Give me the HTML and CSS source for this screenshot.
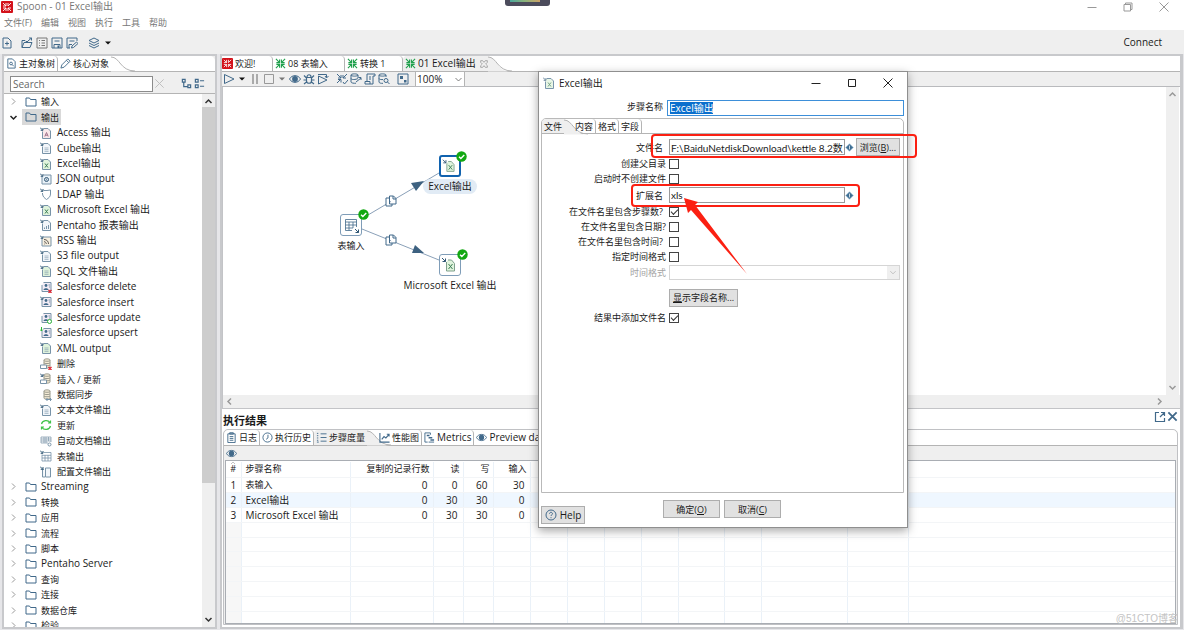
FILE: index.html
```html
<!DOCTYPE html>
<html lang="zh-CN">
<head>
<meta charset="utf-8">
<title>Spoon - 01 Excel输出</title>
<link rel="stylesheet" href="styles.css">
</head>
<body>
<svg class="sprite" aria-hidden="true">
  <symbol id="tab-curve" viewBox="0 0 24 15"><path class="curve-fill" d="M0 0C9 0 9 15 22 15H0z"/><path class="curve-line" d="M0 .5C9 .5 9 14.500 24 14.500"/></symbol>
  <symbol id="logo" viewBox="0 0 12 12"><rect width="12" height="12" rx="1" fill="#d3121a" stroke="none"/><path d="M2 2l3 3M10 2L7 5M2 10l3-3M10 10L7 7M5 2v3H2M7 10V7h3M7 2v3M2 7h3v3" stroke="#fff" stroke-width=".9" fill="none"/></symbol>
  <symbol id="trans" viewBox="0 0 12 12"><path d="M1 1l4 4M11 1L7 5M1 11l4-4M11 11L7 7M5 1.500V5H1.500M7 1.500V5h3.500M1.500 7H5v3.500M10.500 7H7v3.500" stroke="#1fa04c" stroke-width="1.200" fill="none"/></symbol>
  <symbol id="new" viewBox="0 0 12 12"><path d="M2 1h5l3 3v7H2zM6 4.500v4M4 6.500h4"/></symbol>
  <symbol id="open" viewBox="0 0 12 12"><path d="M1 10.500v-7h3l1 1h2M1 10.500l2-5h8l-2 5zM7 4l3.500-3M8 1h2.500v2.500"/></symbol>
  <symbol id="listbox" viewBox="0 0 12 12"><path d="M1 1h10v10H1zM3 3.500h1M3 6h1M3 8.500h1M5.500 3.500H9M5.500 6H9M5.500 8.500H9" stroke="#777"/></symbol>
  <symbol id="save" viewBox="0 0 12 12"><path d="M1 1h10v10H1zM3 11V7.500h6V11M3.500 4h5"/><path d="M6.500 8.500H8V11H6.500z" class="solid"/></symbol>
  <symbol id="saveas" viewBox="0 0 12 12"><path d="M4 11H1V1h10v3M3.500 4h5M3 11V7.500h3M5.500 11l.5-2 4.500-4L12 6.500 7.500 10.500z"/></symbol>
  <symbol id="layers" viewBox="0 0 12 12"><path d="M6 1l5 2.500L6 6 1 3.500zM1 6l5 2.500L11 6M1 8.500L6 11l5-2.500"/></symbol>
  <symbol id="docsearch" viewBox="0 0 12 12"><path d="M2 1h5l3 3v7H2z"/><circle cx="5.500" cy="6" r="1.500"/><path d="M6.500 7l2 2"/></symbol>
  <symbol id="pencil" viewBox="0 0 12 12"><path d="M1 11l1-3.500L8.500 1 11 3.500 4.500 10zM7 2.500L9.500 5"/></symbol>
  <symbol id="x" viewBox="0 0 12 12"><path d="M1.500 1.500l9 9M10.500 1.500l-9 9"/></symbol>
  <symbol id="closetab" viewBox="0 0 12 12"><path d="M1 1h3l2 2.500L8 1h3v2.500L8.500 6 11 8.500V11H8L6 8.500 4 11H1V8.500L3.500 6 1 3.500z"/></symbol>
  <symbol id="min" viewBox="0 0 12 12"><path d="M1.500 6.500h9"/></symbol>
  <symbol id="max" viewBox="0 0 12 12"><path d="M2.500 2.500h7v7h-7z"/></symbol>
  <symbol id="restore" viewBox="0 0 12 12"><path d="M2 3.500h6.500V10H2zM3.500 3.500V2H10v6.500H8.500"/></symbol>
  <symbol id="expand" viewBox="0 0 12 12"><path d="M1.500 1.500h3v3h-3zM7.500 7.500h3v3h-3zM3 4.500V9.500h4.500" stroke-width="1.300"/></symbol>
  <symbol id="collapse" viewBox="0 0 12 12"><path d="M1.500 1.500h3v3h-3zM1.500 7.500h3v3h-3zM6.500 3H11M6.500 9H11" stroke-width="1.300"/></symbol>
  <symbol id="right" viewBox="0 0 12 12"><path d="M4 2l4 4-4 4"/></symbol>
  <symbol id="left" viewBox="0 0 12 12"><path d="M8 2L4 6l4 4"/></symbol>
  <symbol id="down" viewBox="0 0 12 12"><path d="M2 4l4 4 4-4"/></symbol>
  <symbol id="up" viewBox="0 0 12 12"><path d="M2 8l4-4 4 4"/></symbol>
  <symbol id="caret" viewBox="0 0 12 12"><path d="M0 3h12L6 9z" stroke="none" fill="currentColor"/></symbol>
  <symbol id="folder" viewBox="0 0 12 12"><path d="M1 10V2h3.500l1 1.500H11V10z"/></symbol>
  <symbol id="arr" viewBox="0 0 12 12"><path d="M0 .5l2.500 2.500M3 1v2.300H.7" stroke="#2f5674"/></symbol>
  <symbol id="doc" viewBox="0 0 12 12"><path d="M4 1.500h4l2.500 2.500v7.500H2.500V4.500" fill="var(--tint,#fff)"/><use href="#arr"/></symbol>
  <symbol id="access" viewBox="0 0 12 12"><use href="#doc"/><path d="M4.800 9.500l1.700-4 1.700 4M5.300 8.200h2.400" stroke="#a0708a"/></symbol>
  <symbol id="lines" viewBox="0 0 12 12"><use href="#doc"/><path d="M4.500 6h4M4.500 7.700h4M4.500 9.400h4" stroke-width=".6"/></symbol>
  <symbol id="excel" viewBox="0 0 12 12"><use href="#doc"/><path d="M5 5.500l3 4M8 5.500l-3 4" stroke="#3c7d55"/></symbol>
  <symbol id="json" viewBox="0 0 12 12"><path d="M4 2h7v9H2V4" fill="#eaf2f8"/><circle cx="6.500" cy="6.500" r="2" stroke="#2f5674"/><path d="M6.500 5.500v2" stroke-width="1.300"/><use href="#arr"/></symbol>
  <symbol id="ldap" viewBox="0 0 12 12"><path d="M4 2.500h3L10.500 2v4c0 3-2 4-4 5.500C4.500 10 3 9 2.500 6V5"/><use href="#arr"/></symbol>
  <symbol id="chart" viewBox="0 0 12 12"><use href="#doc"/><path d="M4.500 10V8.500M6.500 10V7M8.500 10V6"/></symbol>
  <symbol id="rss" viewBox="0 0 12 12"><path d="M4 2h7v9H2V4" fill="#f7efdf"/><path d="M4 4.500c3 0 4.500 2 4.500 4.500M4 6.700c1.500 0 2.300 1 2.300 2.300M4 9h.6" stroke="#5f5a55"/><use href="#arr"/></symbol>
  <symbol id="person" viewBox="0 0 12 12"><path d="M3.500 1.500H11v9H2V4" fill="#f3ecf5"/><circle cx="6" cy="4.500" r="1.400" class="solid"/><path d="M3.500 9c0-2.500 5-2.500 5 0z" class="solid"/><path d="M8.500 4H10M9 6h1"/></symbol>
  <symbol id="del" viewBox="0 0 12 12"><use href="#person"/><path d="M8.500 9l3 3M11.500 9l-3 3" stroke="#e0202c" stroke-width="1.300"/></symbol>
  <symbol id="ins" viewBox="0 0 12 12"><use href="#person"/><use href="#arr"/></symbol>
  <symbol id="upd" viewBox="0 0 12 12"><use href="#person"/><circle cx="9.500" cy="9.500" r="2" fill="#fff" stroke="#2eb53a"/></symbol>
  <symbol id="ups" viewBox="0 0 12 12"><use href="#person"/><path d="M1.500 0v4M0 2.500L1.500 4 3 2.500" stroke="#2eb53a"/></symbol>
  <symbol id="db" viewBox="0 0 12 12"><path d="M4 2v7c0 1.500 6 1.500 6 0V2c0-1.500-6-1.500-6 0zM4 2.500c0 1 6 1 6 0M4 4.800c0 1 6 1 6 0M4 7c0 1 6 1 6 0" fill="#f5ecd7" stroke="#9a9a8c"/></symbol>
  <symbol id="dbdel" viewBox="0 0 12 12"><use href="#db"/><path d="M.5 7h6v3.500h-6z" fill="#fff"/><path d="M8.500 9l3 3M11.500 9l-3 3" stroke="#e0202c" stroke-width="1.300"/></symbol>
  <symbol id="dbins" viewBox="0 0 12 12"><use href="#db"/><path d="M.5 7h6v3.500h-6z" fill="#fff"/><use href="#arr"/></symbol>
  <symbol id="dbsync" viewBox="0 0 12 12"><use href="#db"/><path d="M6 10.500h5M7.500 9L6 10.500 7.500 12M10 9l1.500 1.500L10 12"/></symbol>
  <symbol id="refresh" viewBox="0 0 12 12"><path d="M1.500 5C2.500 1 8 .5 10 3.500M10.500 7C9.500 11 4 11.500 2 8.500M10.500 1.500V4H8M1.500 10.500V8H4" stroke="#3fc247" stroke-width="1.200"/></symbol>
  <symbol id="autodoc" viewBox="0 0 12 12"><path d="M1 2h10v5M1 2v6h7M1 4h10M1 6h10M4 2v6M6 2v6M8.500 2v4" stroke-width=".7"/><circle cx="9.500" cy="9.500" r="1.500"/></symbol>
  <symbol id="table" viewBox="0 0 12 12"><path d="M4 2.500h7v8.500H2V4.500M2 5.300h9M2 8h9M5 5v6M8 5v6" stroke-width=".8"/><use href="#arr"/></symbol>
  <symbol id="conf" viewBox="0 0 12 12"><path d="M5.500 2h5v9h-5zM4 3.500H2.500V11H5" fill="#f2f6fa"/><use href="#arr"/></symbol>
  <symbol id="play" viewBox="0 0 12 12"><path d="M1.500 1.500L11 6l-9.500 4.500z"/></symbol>
  <symbol id="pause" viewBox="0 0 12 12"><path d="M3 1h2v10H3zM7 1h2v10H7z" stroke="none" fill="#aaa"/></symbol>
  <symbol id="stop" viewBox="0 0 12 12"><path d="M1.500 1.500h9v9h-9z" stroke="#999"/></symbol>
  <symbol id="eye" viewBox="0 0 12 12"><path d="M.5 6C3 1.500 9 1.500 11.500 6 9 10.500 3 10.500.5 6z"/><circle cx="6" cy="6" r="2.900" class="solid"/></symbol>
  <symbol id="bug" viewBox="0 0 12 12"><path d="M3.500 4.500h5V8c0 3-5 3-5 0zM4 4c0-3 4-3 4 0M1 2.500L3.500 5M11 2.500L8.500 5M.5 7h3M8.500 7h3M1 11l2.500-2M11 11L8.500 9" stroke-width="1.200"/></symbol>
  <symbol id="replay" viewBox="0 0 12 12"><path d="M1.500 3L10 7l-8.500 4zM1 1.500h8.500V4.500M8 3l1.500 2L11.500 3"/></symbol>
  <symbol id="verify" viewBox="0 0 12 12"><path d="M1 1l4 4M11 1L7 5M1 10l4-4M5 2v3H2M7 2v3h3M2 6.500h3v3M7 9l1.500 2L12 7"/></symbol>
  <symbol id="impact" viewBox="0 0 12 12"><path d="M1 2v7c0 1 3 1.500 5 1.200M1 2c0-1.500 7-1.500 7 0s-7 1.500-7 0M1 5.500c0 1.500 5 1.200 7 0M8 2v3M6 9l5-4M8.500 4.500H11V7"/></symbol>
  <symbol id="sql" viewBox="0 0 12 12"><path d="M3 8V1h8v2H9v8H1V8.500h5V11M5 4h2M5 6h2"/></symbol>
  <symbol id="dbfind" viewBox="0 0 12 12"><path d="M1 2v7c0 1 2 1.500 4 1.300M1 2c0-1.500 7-1.500 7 0s-7 1.500-7 0M1 5.500c0 1 3 1.300 4 1M8 2v2"/><circle cx="8" cy="7.500" r="2"/><path d="M9.500 9l2 2"/></symbol>
  <symbol id="showres" viewBox="0 0 12 12"><path d="M1 1h10v10H1z"/><path d="M3 3h3v3H3zM7 7h2.500v2.500H7z" class="solid"/></symbol>
  <symbol id="log" viewBox="0 0 12 12"><path d="M2 2h8v9.500H2zM4 .8h4v1.500H4zM4 5h4M4 7h4M4 9h4"/></symbol>
  <symbol id="clock" viewBox="0 0 12 12"><circle cx="6" cy="6" r="5"/><path d="M6.500 3v3.500L4.500 8"/></symbol>
  <symbol id="steps" viewBox="0 0 12 12"><path d="M1 1.500h1.500M1 4h1.500M1 6.500h1.500M1 9h1.500M5 2h6.500M5 6h6.500M5 10h6.500M1 11h2"/></symbol>
  <symbol id="perf" viewBox="0 0 12 12"><path d="M1 1v10h10.500M3 8l2.500-3 2 1.500L11 2.500M8.500 2.500H11V5" stroke-width="1.200"/></symbol>
  <symbol id="metrics" viewBox="0 0 12 12"><path d="M4 11H1V1h6v2M5 11h6"/><path d="M3 3h3v1.500H3zM5 5.500h4V7H5zM7 8h4v1.500H7z" class="solid"/></symbol>
  <symbol id="popout" viewBox="0 0 12 12"><path d="M5 1.500H1.500v9h9V7M7 1.500h3.500V5M10.500 1.500L6 6" stroke-width="1.200"/></symbol>
  <symbol id="diamond" viewBox="0 0 12 12"><path d="M6 1l5 5-5 5-5-5z" fill="#3d6d92" stroke="#9ebdd3"/><path d="M6 3.500v5" stroke="#fff"/></symbol>
  <symbol id="help" viewBox="0 0 12 12"><circle cx="6" cy="6" r="5"/><path d="M4.500 4.800c0-2 3-2 3 0 0 1-1.500 1-1.500 2.200M6 8.200v1"/></symbol>
  <symbol id="copy" viewBox="0 0 12 12"><path d="M4.500 1h4L11 3.500V9H4.500zM8 1v3h3M4.500 3H1v8h6V9" fill="#fff"/></symbol>
  <symbol id="ok" viewBox="0 0 12 12"><circle cx="6" cy="6" r="5.700" fill="#12a812" stroke="none"/><path d="M3.300 6.200l2 1.900L9 4.300" stroke="#fff" stroke-width="1.500"/></symbol>
  <symbol id="n-excel" viewBox="0 0 20 20"><path d="M6.500 7v9h8V8.500l-3-3.500H8" fill="#dff3dc" stroke="#7ea08c"/><path d="M8.500 9l4 5M12.500 9l-4 5" stroke="#3c7d55"/><path d="M2 3l3.500 3.500M5.500 3.500v3h-3" stroke="#2f5674"/></symbol>
  <symbol id="n-table" viewBox="0 0 20 20"><path d="M11 15.500H4.500v-11h11V12M4.500 7h11M4.500 10h11M4.500 13H12M8 7v8.500M12 7v6" stroke-width=".8"/><path d="M14 14l3.500 3.500M17.500 14.500v3h-3" stroke="#2f5674"/></symbol>
</svg>

<div class="notch" aria-hidden="true"><span></span></div>
<header class="titlebar">
  <svg class="icon logo"><use href="#logo"/></svg>
  <h1>Spoon - 01 Excel输出</h1>
  <div class="winbtns">
    <button aria-label="最小化"><svg class="icon"><use href="#min"/></svg></button>
    <button aria-label="还原"><svg class="icon"><use href="#restore"/></svg></button>
    <button aria-label="关闭"><svg class="icon"><use href="#x"/></svg></button>
  </div>
</header>
<nav class="menu"><a href="#">文件(F)</a><a href="#">编辑</a><a href="#">视图</a><a href="#">执行</a><a href="#">工具</a><a href="#">帮助</a></nav>
<div class="maintools">
  <button class="first" aria-label="新建"><svg class="icon"><use href="#new"/></svg></button>
  <button aria-label="打开"><svg class="icon"><use href="#open"/></svg></button>
  <button aria-label="浏览"><svg class="icon"><use href="#listbox"/></svg></button>
  <button aria-label="保存"><svg class="icon"><use href="#save"/></svg></button>
  <button aria-label="另存为"><svg class="icon"><use href="#saveas"/></svg></button>
  <button class="persp" aria-label="视图"><svg class="icon"><use href="#layers"/></svg><svg class="icon tiny"><use href="#caret"/></svg></button>
  <button class="connect">Connect</button>
</div>

<main>
  <aside class="side">
    <div class="tabs">
      <button class="tab"><svg class="icon"><use href="#docsearch"/></svg>主对象树</button>
      <button class="tab active"><svg class="icon"><use href="#pencil"/></svg>核心对象<svg class="curve"><use href="#tab-curve"/></svg></button>
    </div>
    <div class="searchbar">
      <input type="text" placeholder="Search" aria-label="Search">
      <button class="clear" aria-label="清除"><svg class="icon"><use href="#x"/></svg></button>
      <button aria-label="展开"><svg class="icon"><use href="#expand"/></svg></button>
      <button aria-label="折叠"><svg class="icon"><use href="#collapse"/></svg></button>
    </div>
    <div class="treebox">
      <ul class="tree">
        <li class="group"><svg class="chev"><use href="#right"/></svg><span><svg class="icon"><use href="#folder"/></svg>输入</span></li>
        <li class="group open"><svg class="chev"><use href="#down"/></svg><span><svg class="icon"><use href="#folder"/></svg>输出</span></li>
        <li class="lat"><svg class="icon pink"><use href="#access"/></svg>Access 输出</li>
        <li class="lat"><svg class="icon"><use href="#lines"/></svg>Cube输出</li>
        <li class="lat"><svg class="icon green"><use href="#excel"/></svg>Excel输出</li>
        <li class="lat"><svg class="icon"><use href="#json"/></svg>JSON output</li>
        <li class="lat"><svg class="icon"><use href="#ldap"/></svg>LDAP 输出</li>
        <li class="lat"><svg class="icon green"><use href="#excel"/></svg>Microsoft Excel 输出</li>
        <li class="lat"><svg class="icon"><use href="#chart"/></svg>Pentaho 报表输出</li>
        <li class="lat"><svg class="icon"><use href="#rss"/></svg>RSS 输出</li>
        <li class="lat"><svg class="icon"><use href="#lines"/></svg>S3 file output</li>
        <li class="lat"><svg class="icon green"><use href="#lines"/></svg>SQL 文件输出</li>
        <li class="lat"><svg class="icon"><use href="#del"/></svg>Salesforce delete</li>
        <li class="lat"><svg class="icon"><use href="#ins"/></svg>Salesforce insert</li>
        <li class="lat"><svg class="icon"><use href="#upd"/></svg>Salesforce update</li>
        <li class="lat"><svg class="icon"><use href="#ups"/></svg>Salesforce upsert</li>
        <li class="lat"><svg class="icon green"><use href="#lines"/></svg>XML output</li>
        <li><svg class="icon"><use href="#dbdel"/></svg>删除</li>
        <li><svg class="icon"><use href="#dbins"/></svg>插入 / 更新</li>
        <li><svg class="icon"><use href="#dbsync"/></svg>数据同步</li>
        <li><svg class="icon"><use href="#lines"/></svg>文本文件输出</li>
        <li><svg class="icon"><use href="#refresh"/></svg>更新</li>
        <li><svg class="icon"><use href="#autodoc"/></svg>自动文档输出</li>
        <li><svg class="icon"><use href="#table"/></svg>表输出</li>
        <li><svg class="icon"><use href="#conf"/></svg>配置文件输出</li>
        <li class="group lat"><svg class="chev"><use href="#right"/></svg><span><svg class="icon"><use href="#folder"/></svg>Streaming</span></li>
        <li class="group"><svg class="chev"><use href="#right"/></svg><span><svg class="icon"><use href="#folder"/></svg>转换</span></li>
        <li class="group"><svg class="chev"><use href="#right"/></svg><span><svg class="icon"><use href="#folder"/></svg>应用</span></li>
        <li class="group"><svg class="chev"><use href="#right"/></svg><span><svg class="icon"><use href="#folder"/></svg>流程</span></li>
        <li class="group"><svg class="chev"><use href="#right"/></svg><span><svg class="icon"><use href="#folder"/></svg>脚本</span></li>
        <li class="group lat"><svg class="chev"><use href="#right"/></svg><span><svg class="icon"><use href="#folder"/></svg>Pentaho Server</span></li>
        <li class="group"><svg class="chev"><use href="#right"/></svg><span><svg class="icon"><use href="#folder"/></svg>查询</span></li>
        <li class="group"><svg class="chev"><use href="#right"/></svg><span><svg class="icon"><use href="#folder"/></svg>连接</span></li>
        <li class="group"><svg class="chev"><use href="#right"/></svg><span><svg class="icon"><use href="#folder"/></svg>数据仓库</span></li>
        <li class="group"><svg class="chev"><use href="#right"/></svg><span><svg class="icon"><use href="#folder"/></svg>检验</span></li>
      </ul>
      <div class="vscroll dark"><svg class="chev"><use href="#up"/></svg><div class="track"><div class="thumb"></div></div><svg class="chev"><use href="#down"/></svg></div>
    </div>
  </aside>

  <section class="work">
    <div class="tabs files">
      <button class="tab welcome"><svg class="icon"><use href="#logo"/></svg>欢迎!</button>
      <button class="tab t08"><svg class="icon"><use href="#trans"/></svg>08 表输入</button>
      <button class="tab t1"><svg class="icon"><use href="#trans"/></svg>转换 1</button>
      <button class="tab active lat"><svg class="icon"><use href="#trans"/></svg>01 Excel输出<svg class="icon closer"><use href="#closetab"/></svg><svg class="curve"><use href="#tab-curve"/></svg></button>
    </div>
    <div class="runbar">
      <button aria-label="运行"><svg class="icon"><use href="#play"/></svg></button>
      <button aria-label="运行选项"><svg class="icon tiny"><use href="#caret"/></svg></button>
      <button aria-label="暂停"><svg class="icon"><use href="#pause"/></svg></button>
      <button aria-label="停止"><svg class="icon"><use href="#stop"/></svg></button>
      <button class="off" aria-label="停止选项"><svg class="icon tiny"><use href="#caret"/></svg></button>
      <button aria-label="预览"><svg class="icon"><use href="#eye"/></svg></button>
      <button aria-label="调试"><svg class="icon"><use href="#bug"/></svg></button>
      <button aria-label="重放"><svg class="icon"><use href="#replay"/></svg></button>
      <button class="gap" aria-label="检验"><svg class="icon"><use href="#verify"/></svg></button>
      <button aria-label="影响分析"><svg class="icon"><use href="#impact"/></svg></button>
      <button aria-label="SQL"><svg class="icon"><use href="#sql"/></svg></button>
      <button aria-label="浏览数据库"><svg class="icon"><use href="#dbfind"/></svg></button>
      <button class="gap" aria-label="显示结果"><svg class="icon"><use href="#showres"/></svg></button>
      <span class="combo zoom"><select aria-label="缩放"><option>100%</option></select><svg class="chev"><use href="#down"/></svg></span>
    </div>
    <div class="canvasbox">
      <div class="canvas">
        <svg class="hops" width="260" height="220" aria-hidden="true">
          <path d="M145 128l71-42M139 142l77 31" stroke="#8aa0b8"/>
          <path d="M201 94l-13 2 5 8zM201 166l-9-8-3 8z" fill="#3d6180" stroke="none"/>
          <use href="#copy" x="162" y="108" width="12" height="12"/><use href="#copy" x="162" y="147" width="12" height="12"/>
        </svg>
        <div class="node n1"><span class="box"><svg class="glyph"><use href="#n-table"/></svg><svg class="ok"><use href="#ok"/></svg></span><span class="name">表输入</span></div>
        <div class="node n2 sel lat"><span class="box"><svg class="glyph"><use href="#n-excel"/></svg><svg class="ok"><use href="#ok"/></svg></span><span class="name">Excel输出</span></div>
        <div class="node n3 lat"><span class="box"><svg class="glyph"><use href="#n-excel"/></svg><svg class="ok"><use href="#ok"/></svg></span><span class="name">Microsoft Excel 输出</span></div>
      </div>
      <div class="vscroll"><svg class="chev"><use href="#up"/></svg><div class="track"></div><svg class="chev"><use href="#down"/></svg></div>
      <div class="hscroll"><svg class="chev"><use href="#left"/></svg><svg class="chev"><use href="#right"/></svg></div>
    </div>
    <div class="results">
      <div class="rhead"><h2>执行结果</h2><button aria-label="弹出"><svg class="icon"><use href="#popout"/></svg></button><button aria-label="关闭"><svg class="icon bold"><use href="#x"/></svg></button></div>
      <div class="folder">
        <div class="tabs rtabs">
          <button class="tab"><svg class="icon"><use href="#log"/></svg>日志</button>
          <button class="tab"><svg class="icon"><use href="#clock"/></svg>执行历史</button>
          <button class="tab active"><svg class="icon"><use href="#steps"/></svg>步骤度量<svg class="curve"><use href="#tab-curve"/></svg></button>
          <button class="tab"><svg class="icon"><use href="#perf"/></svg>性能图</button>
          <button class="tab lat"><svg class="icon"><use href="#metrics"/></svg>Metrics</button>
          <button class="tab lat"><svg class="icon"><use href="#eye"/></svg>Preview data</button>
        </div>
        <div class="rtools"><button aria-label="显示"><svg class="icon"><use href="#eye"/></svg></button></div>
        <div class="gridbox">
        <table>
          <colgroup><col class="c16"><col class="c109"><col class="c83"><col class="c30"><col class="c30"><col class="c37"><col class="c37"><col class="c37"><col class="c37"><col class="c37"><col class="c46"><col class="c37"><col class="c86"><col class="c61"><col></colgroup>
          <thead><tr><th class="num"><svg class="sort"><use href="#up"/></svg>#</th><th class="name">步骤名称</th><th>复制的记录行数</th><th>读</th><th>写</th><th>输入</th><th></th><th></th><th></th><th></th><th></th><th></th><th></th><th></th><th></th></tr></thead>
          <tbody>
            <tr><td class="num">1</td><td class="name cjk">表输入</td><td>0</td><td>0</td><td>60</td><td>30</td><td></td><td></td><td></td><td></td><td></td><td></td><td></td><td></td><td></td></tr>
            <tr class="alt"><td class="num">2</td><td class="name">Excel输出</td><td>0</td><td>30</td><td>30</td><td>0</td><td></td><td></td><td></td><td></td><td></td><td></td><td></td><td></td><td></td></tr>
            <tr><td class="num">3</td><td class="name">Microsoft Excel 输出</td><td>0</td><td>30</td><td>30</td><td>0</td><td></td><td></td><td></td><td></td><td></td><td></td><td></td><td></td><td></td></tr>
            <tr class="empty"><td></td><td></td><td></td><td></td><td></td><td></td><td></td><td></td><td></td><td></td><td></td><td></td><td></td><td></td><td></td></tr>
            <tr class="empty"><td></td><td></td><td></td><td></td><td></td><td></td><td></td><td></td><td></td><td></td><td></td><td></td><td></td><td></td><td></td></tr>
            <tr class="empty"><td></td><td></td><td></td><td></td><td></td><td></td><td></td><td></td><td></td><td></td><td></td><td></td><td></td><td></td><td></td></tr>
            <tr class="empty"><td></td><td></td><td></td><td></td><td></td><td></td><td></td><td></td><td></td><td></td><td></td><td></td><td></td><td></td><td></td></tr>
            <tr class="empty"><td></td><td></td><td></td><td></td><td></td><td></td><td></td><td></td><td></td><td></td><td></td><td></td><td></td><td></td><td></td></tr>
            <tr class="empty"><td></td><td></td><td></td><td></td><td></td><td></td><td></td><td></td><td></td><td></td><td></td><td></td><td></td><td></td><td></td></tr>
            <tr class="empty"><td></td><td></td><td></td><td></td><td></td><td></td><td></td><td></td><td></td><td></td><td></td><td></td><td></td><td></td><td></td></tr>
          </tbody>
        </table>
        </div>
      </div>
    </div>
  </section>
</main>

<div class="dialog" role="dialog" aria-labelledby="dlg-title">
  <div class="dtitle"><svg class="icon green"><use href="#excel"/></svg><span id="dlg-title">Excel输出</span>
    <div class="winbtns">
      <button aria-label="最小化"><svg class="icon"><use href="#min"/></svg></button>
      <button aria-label="最大化"><svg class="icon"><use href="#max"/></svg></button>
      <button aria-label="关闭"><svg class="icon"><use href="#x"/></svg></button>
    </div>
  </div>
  <div class="stepname"><label for="step">步骤名称</label><div class="stepfield"><span class="marked"><input id="step" type="text" value="Excel输出"></span></div></div>
  <div class="dfolder">
    <div class="tabs dtabs">
      <button class="tab active">文件<svg class="curve"><use href="#tab-curve"/></svg></button>
      <button class="tab">内容</button><button class="tab">格式</button><button class="tab">字段</button>
    </div>
    <form class="fields">
      <div class="row tall"><label class="in" for="fn">文件名</label><input id="fn" class="txt" type="text" value="F:\BaiduNetdiskDownload\kettle 8.2数"><svg class="icon"><use href="#diamond"/></svg><button type="button" class="btn browse">浏览(<u>B</u>)...</button></div>
      <div class="row"><label for="c1">创建父目录</label><input id="c1" type="checkbox"></div>
      <div class="row"><label for="c2">启动时不创建文件</label><input id="c2" type="checkbox"></div>
      <div class="row tall"><label class="in" for="ext">扩展名</label><input id="ext" class="txt" type="text" value="xls"><svg class="icon"><use href="#diamond"/></svg></div>
      <div class="row"><label class="in" for="c3">在文件名里包含步骤数?</label><input id="c3" type="checkbox" checked></div>
      <div class="row"><label for="c4">在文件名里包含日期?</label><input id="c4" type="checkbox"></div>
      <div class="row"><label class="in" for="c5">在文件名里包含时间?</label><input id="c5" type="checkbox"></div>
      <div class="row"><label for="c6">指定时间格式</label><input id="c6" type="checkbox"></div>
      <div class="row sel"><label for="tf">时间格式</label><span class="combo"><select id="tf" disabled><option></option></select><svg class="chev"><use href="#down"/></svg></span></div>
      <div class="row show"><button type="button" class="btn"><u>显</u>示字段名称...</button></div>
      <div class="row"><label for="c7">结果中添加文件名</label><input id="c7" type="checkbox" checked></div>
    </form>
  </div>
  <div class="dfoot">
    <button class="btn help lat"><svg class="icon"><use href="#help"/></svg>Help</button>
    <button class="btn ok-btn">确定(<u>O</u>)</button>
    <button class="btn ok-btn">取消(<u>C</u>)</button>
  </div>
  <svg class="marks" width="380" height="220" aria-hidden="true">
    <rect x="114" y="64" width="264" height="22" rx="3"/><rect x="94" y="114" width="227" height="21" rx="3"/>
    <path d="M146 127l14 4-3 3 52 69-56-64-3 3z"/>
  </svg>
</div>
<div class="watermark">@51CTO博客</div>
</body>
</html>
```
FILE: styles.css
```css
* { box-sizing: border-box; }
html, body { height: 100%; }
body {
  margin: 0;
  display: flex;
  flex-direction: column;
  overflow: hidden;
  position: relative;
  background: #fff;
  color: #1a1a1a;
  font: 9px/15px "Open Sans", "Noto Sans CJK SC", sans-serif;
}
button, input, select { font: inherit; color: inherit; margin: 0; padding: 0; border: 0; background: none; outline: 0; border-radius: 0; }
button { display: flex; align-items: center; justify-content: center; }
h1, h2 { margin: 0; font-weight: 400; }
.lat { font-size: 10px; }
.sprite { position: absolute; width: 0; height: 0; }
.icon, .chev, .glyph, .ok, .hops, .sort { fill: none; stroke: #41698a; stroke-width: 1; flex: none; }
.icon { width: 12px; height: 12px; --tint: #f2f6fa; }
.icon .solid, .solid { fill: #41698a; stroke: none; }
.tiny { width: 6px; height: 6px; }
.chev { width: 9px; height: 9px; stroke: #555; stroke-width: 1; }
.green { --tint: #dff3dc; }
.pink { --tint: #f8e8ea; }
.icon.bold { stroke-width: 2; width: 11px; height: 11px; }

.notch { position: absolute; left: 505px; top: 0; width: 45px; height: 6px; background: #4c4c5c; border-radius: 0 0 3px 3px; padding: 0 10px 0 5px; }
.notch span { display: block; height: 2px; background: linear-gradient(90deg, #4aa79c, #8bb27a, #cda267); }
.titlebar { display: flex; align-items: center; height: 13px; padding-left: 1px; color: #777; flex: none; }
.titlebar h1 { font-size: 10px; line-height: 13px; margin-left: 4px; }
.winbtns { display: flex; gap: 24px; margin-left: auto; }
.winbtns .icon { stroke: #999; }
.titlebar .winbtns { padding-right: 14px; }
.menu { display: flex; gap: 9px; height: 17px; padding: 2px 4px 0; flex: none; }
.menu a { color: #777; text-decoration: none; line-height: 15px; }
.maintools { display: flex; align-items: center; gap: 3px; height: 24px; padding: 1px 22px 0 1px; background: #efefef; flex: none; }
.maintools .first { margin-right: 5px; }
.maintools .persp { margin-left: 7px; gap: 5px; }
.tiny { color: #111; }
.off .tiny { color: #777; }
.connect { margin-left: auto; font-size: 10px; }

main { flex: 1; min-height: 0; display: flex; gap: 3px; padding: 0 1px 1px 2px; background: #e6e6e9; }
.side { width: 215px; flex: none; display: flex; flex-direction: column; border: 2px solid #c8c9cc; background: #efefef; min-height: 0; }
.work { flex: 1; min-width: 0; display: flex; flex-direction: column; border: 2px solid #c8c9cc; border-right-width: 3px; background: #fff; }

.tabs { display: flex; height: 16px; flex: none; background: #fff; border-bottom: 1px solid #b4b4b4; border-radius: 5px 5px 0 0; white-space: nowrap; }
.tab { gap: 2px; padding: 0 2px; border-right: 1px solid #b4b4b4; border-radius: 0 4px 0 0; height: 15px; position: relative; }
.tab .icon { width: 11px; height: 11px; }
.tab.active { background: #efefef; border-right: 0; border-radius: 4px 0 0; height: 15px; margin-right: 16px; }
.side .tab.active { background: #fff; --curve: #fff; }
.tab.active .curve { position: absolute; left: 100%; top: 0; width: 24px; height: 16px; }
.curve-fill { fill: var(--curve, #efefef); stroke: none; }
.curve-line { fill: none; stroke: #b4b4b4; }

.searchbar { display: flex; align-items: center; height: 22px; padding: 2px 8px 0 6px; border-bottom: 1px solid #b4b4b4; }
.searchbar input { width: 143px; height: 16px; border: 1px solid #8b8b8b; background: #fff; padding: 0 2px; font-size: 10px; margin-right: 1px; }
.searchbar input::placeholder { color: #666; opacity: 1; }
.searchbar button { margin-right: 2px; }
.searchbar .icon { width: 11px; height: 11px; }
.searchbar .clear { margin-right: auto; }
.clear .icon { stroke: #bbb; }
.treebox { flex: 1; min-height: 0; display: flex; background: #fff; }
.tree { list-style: none; margin: 0; padding: 0; flex: 1; overflow: hidden; }
.tree li { display: flex; align-items: center; height: 15px; gap: 5px; padding-left: 36px; white-space: nowrap; }
.tree li:nth-child(5n+2), .tree li:nth-child(5n+4) { height: 16px; }
.tree li:not(.group) > .icon { stroke: #7893a8; }
.tree li.group { padding-left: 5px; gap: 4px; }
.tree .group span { display: flex; align-items: center; gap: 4px; height: 100%; padding: 0 2px 0 3px; }
.tree .group .chev { stroke: #777; }
.tree .open span { background: #d9d9d9; }
.tree .open .chev { stroke: #222; stroke-width: 2; }
.vscroll { width: 13px; flex: none; display: flex; flex-direction: column; align-items: center; background: #efefef; padding: 3px 0; }
.vscroll .chev { stroke: #999; stroke-width: 2; }
.track { flex: 1; align-self: stretch; padding-top: 1px; }
.vscroll.dark .chev { stroke: #333; }
.dark .thumb { height: 74%; background: #cdcdcd; }

.files .tab { padding: 0 2px; }
.files .tab.welcome { width: 51px; justify-content: start; padding-left: 0; }
.files .t08 { width: 72px; justify-content: start; }
.files .t1 { width: 58px; justify-content: start; }
.files .closer { stroke: #888; width: 8px; height: 8px; margin-left: 2px; }
.files .tab.active { padding-right: 0; }
.runbar { display: flex; align-items: center; height: 15px; flex: none; gap: 2px; padding-left: 1px; background: #efefef; border-bottom: 1px solid #b9babd; }
.runbar .icon { width: 12px; height: 12px; }
.runbar .icon.tiny { width: 6px; height: 6px; margin: 0 2px; }
.runbar .gap { margin-left: 5px; }
.combo { position: relative; display: flex; align-items: center; }
.combo select { appearance: none; width: 100%; height: 15px; background: #fff; border: 1px solid #b4b4b4; padding: 0 2px; }
.combo .chev { position: absolute; right: 2px; pointer-events: none; }
.zoom { width: 50px; margin-left: 4px; font-size: 10px; }
.combo.zoom select { border-width: 0 1px; height: 14px; padding: 0 1px; }
.canvasbox { flex: 1; min-height: 0; display: grid; grid-template-columns: 1fr 14px; grid-template-rows: 1fr 13px; border: 0 solid #c3c4c7; border-width: 0 0 1px 1px; }
.canvas { position: relative; overflow: hidden; }
.hscroll { grid-column: 1 / 3; background: #efefef; display: flex; justify-content: space-between; align-items: center; padding: 0 16px 0 2px; }
.hscroll .chev { stroke: #999; stroke-width: 2; }
.hops { position: absolute; left: 0; top: 0; }
.node { position: absolute; display: flex; flex-direction: column; align-items: center; width: 110px; }
.n1 { left: 73px; top: 127px; }
.n2 { left: 172px; top: 68px; }
.n3 { left: 172px; top: 167px; }
.box { position: relative; width: 22px; height: 22px; border: 1px solid #7f9db8; border-radius: 3px; background: #fff; }
.sel .box { border: 2px solid #1062ae; }
.glyph { display: block; width: 100%; height: 100%; }
.ok { position: absolute; right: -8px; top: -6px; width: 11px; height: 11px; }
.node .name { padding: 0 5px; margin-top: 2px; border-radius: 8px; white-space: nowrap; }
.sel .name { background: #e1ebf5; }

.results { flex: none; height: 218px; display: flex; flex-direction: column; padding: 0 2px 2px 1px; }
.rhead { display: flex; align-items: center; height: 20px; flex: none; gap: 1px; padding-top: 2px; }
.rhead h2 { font-size: 11px; font-weight: 700; margin-right: auto; }
.rhead button { height: 100%; align-items: start; }
.folder { flex: 1; min-height: 0; display: flex; flex-direction: column; border: 1px solid #c0c1c4; border-radius: 5px 5px 0 0; background: #efefef; }
.rtabs .tab.active { margin-right: 10px; }
.rtabs .tab:last-child { border: 0; }
.rtools { height: 14px; flex: none; display: flex; padding-left: 2px; }
.rtools .icon { width: 11px; height: 11px; }
.gridbox { flex: 1; min-height: 0; overflow: hidden; border: 1px solid #a9adb3; background: #fff; margin: 0 1px; padding-top: 1px; }
table { width: 100%; table-layout: fixed; border-collapse: collapse; }
th, td { padding: 0 5px 0 0; height: 15px; line-height: 14px; text-align: right; font-weight: 400; white-space: nowrap; border: 0 solid #eaf1f8; border-right-width: 1px; border-bottom: 1px solid #f3f5f7; }
th { padding-right: 3px; }
tbody tr:nth-child(5n) td { height: 14px; }
td { font-size: 10px; }
td.cjk { font-size: 9px; }
th.name, td.name { text-align: left; padding-left: 4px; }
th.num, td.num { text-align: center; padding: 0; position: relative; }
.sort { position: absolute; left: 4px; top: -2px; width: 6px; height: 6px; stroke: #888; }
.alt td { background: #eff7ff; }
.empty td:first-child { background: #f7f7f7; }
td:last-child, th:last-child { border-right: 0; }
.c16 { width: 15px; } .c109 { width: 109px; } .c83 { width: 83px; } .c30 { width: 30px; } .c37 { width: 37px; }
.c46 { width: 46px; } .c86 { width: 86px; } .c61 { width: 61px; }

.dialog { position: absolute; left: 538px; top: 71px; width: 370px; background: #fff; border: 1px solid #8f8f8f; box-shadow: 0 3px 9px rgba(0, 0, 0, .35); padding: 0 3px 3px 2px; color: #1a1a1a; }
.dtitle { display: flex; align-items: center; height: 22px; gap: 4px; padding: 0 10px 0 2px; }
.dtitle > span { font-size: 10px; }
.dtitle .winbtns .icon { stroke: #222; width: 12px; height: 12px; }
.dtitle > .icon { opacity: .7; }
.stepname { display: flex; height: 24px; padding-top: 6px; }
.stepname label { width: 122px; text-align: right; margin-right: 4px; line-height: 13px; }
.stepfield { flex: 1; height: 16px; border: 1px solid #3d8fd9; padding: 1px 2px; font-size: 10px; }
.marked { display: block; width: 43px; height: 12px; background: #0a6fcd; }
.marked input { display: block; width: 100%; height: 12px; color: #fff; }
.dfolder { height: 375px; border: 1px solid #b9b9b9; border-radius: 5px 5px 0 0; }
.dtabs { height: 15px; }
.dtabs .tab { padding: 0 2px; height: 14px; }
.dtabs .tab.active { margin-right: 9px; height: 14px; }
.fields { padding: 4px 3px 0 0; }
.row { display: flex; align-items: center; height: 15px; }
.row label { width: 124px; text-align: right; margin-right: 3px; }
.row label.in { padding-right: 3px; }
.tall { height: 18px; }
.txt { width: 176px; height: 16px; border: 1px solid #9a9a9a; padding: 0 1px; font: 10px Lato, "Noto Sans CJK SC", sans-serif; background: #fff; }
.tall .icon { width: 9px; height: 9px; margin: 0 2px 0 0; }
input[type="checkbox"] { appearance: none; width: 10px; height: 10px; border: 1px solid #444; background: #fff; position: relative; }
input[type="checkbox"]:checked::after { content: ""; position: absolute; left: 1px; top: 1px; width: 6px; height: 3px; border: solid #333; border-width: 0 0 1px 1px; transform: rotate(-45deg); }
.btn { height: 18px; background: #e1e1e1; border: 1px solid #adadad; padding: 0 3px; white-space: nowrap; }
.browse { flex: 1; }
.row.sel { height: 16px; color: #a3a3a3; }
.row.sel .combo { flex: 1; }
.row.sel select { border-color: #c4c4c4; }
.row.sel .chev { background: #efefef; width: 12px; height: 13px; right: 1px; padding: 2px; stroke: #aaa; }
.show { margin: 9px 0 4px 127px; height: 17px; }
.dfoot { display: flex; align-items: center; height: 31px; gap: 4px; padding-top: 1px; }
.help { gap: 3px; align-self: flex-end; margin-right: 74px; }
.help.btn { padding: 0 3px; width: 44px; }
.ok-btn { width: 57px; }
.marks { position: absolute; left: -1px; top: -1px; overflow: visible; pointer-events: none; }
.marks rect { fill: none; stroke: #fb2012; stroke-width: 2; }
.marks path { fill: #fb2012; }
.watermark { position: absolute; right: 6px; bottom: 4px; font: 10px/15px "Liberation Sans", "Noto Sans CJK SC", sans-serif; color: #c4c4c4; }
```
